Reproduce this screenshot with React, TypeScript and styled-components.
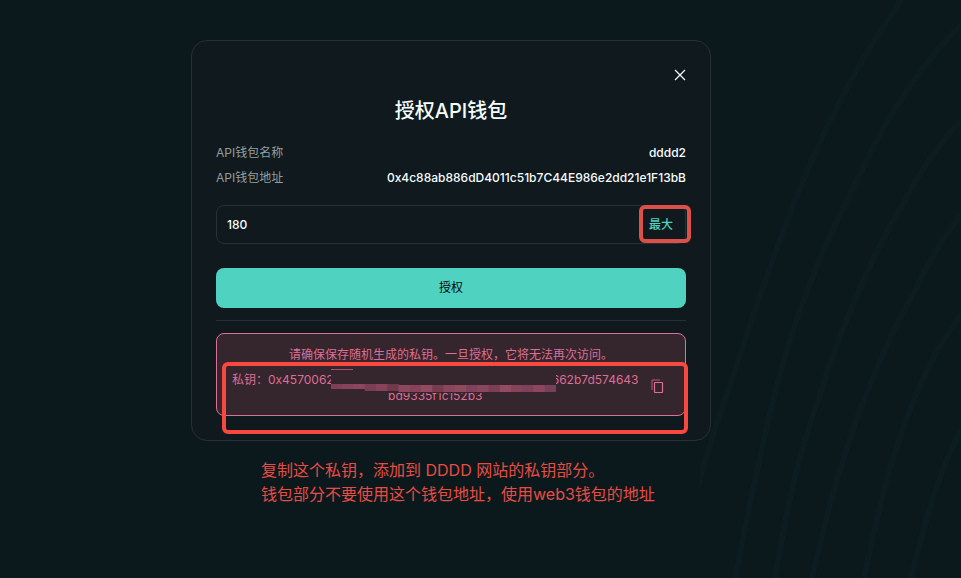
import React, { useState } from "react";
import styled, { createGlobalStyle } from "styled-components";

const GlobalStyle = createGlobalStyle`
  * { box-sizing: border-box; }
  body {
    margin: 0;
    background: #0b191d;
    color: #f6fefd;
    font-family: Inter, "Noto Sans CJK SC", sans-serif;
    font-size: 12px;
    line-height: 17px;
  }
  button, input { font: inherit; color: inherit; }
`;

const Page = styled.main`
  position: relative;
  display: flex;
  flex-direction: column;
  align-items: center;
  gap: 17px;
  min-height: 100vh;
  padding: 40px 59px 40px 0;
  overflow: hidden;
`;

const Waves = styled.svg`
  position: absolute;
  top: 0;
  right: 0;
  z-index: -1;
  fill: none;
  stroke: #0d1c20;
  stroke-width: 6;
`;

const Card = styled.section`
  display: flex;
  flex-direction: column;
  width: 100%;
  max-width: 520px;
  padding: 24px;
  border: 1px solid #273035;
  border-radius: 16px;
  background: #0f191e;
`;

const CloseButton = styled.button`
  display: flex;
  align-self: flex-end;
  padding: 4px 0;
  border: 0;
  background: none;
  cursor: pointer;
`;

const Title = styled.h1`
  margin: 12px 0 19px;
  font-size: 20px;
  font-weight: 500;
  line-height: 28px;
  text-align: center;
`;

const Details = styled.dl`
  display: flex;
  flex-direction: column;
  gap: 8px;
  margin: 0;
`;

const DetailRow = styled.div`
  display: flex;
  justify-content: space-between;
`;

const Term = styled.dt`
  color: #949e9c;
`;

const Value = styled.dd`
  margin: 0;
  font-weight: 500;
`;

const Field = styled.div`
  position: relative;
  display: flex;
  align-items: center;
  height: 39px;
  margin: 19px 0 24px;
  padding: 0 12px 0 10px;
  border: 1px solid #273035;
  border-radius: 8px;
`;

const DaysInput = styled.input`
  flex: 1;
  min-width: 0;
  padding: 0;
  border: 0;
  outline: 0;
  background: none;
  font-weight: 500;
`;

const MaxButton = styled.button`
  padding: 0;
  border: 0;
  background: none;
  color: #50d2c1;
  font-weight: 500;
  cursor: pointer;
`;

const Highlight = styled.span<{ $color: string; $inset: string }>`
  position: absolute;
  inset: ${(p) => p.$inset};
  border: 4px solid ${(p) => p.$color};
  border-radius: 6px;
  pointer-events: none;
`;

const SubmitButton = styled.button`
  height: 40px;
  padding: 0 0 2px;
  border: 0;
  border-radius: 8px;
  background: #50d2c1;
  color: #04060c;
  cursor: pointer;
`;

const Divider = styled.hr`
  width: 100%;
  height: 1px;
  margin: 12px 0;
  border: 0;
  background: #273035;
`;

const Warning = styled.div`
  position: relative;
  display: flex;
  flex-direction: column;
  gap: 9px;
  height: 83px;
  padding: 12px 15px;
  border: 1px solid #d9719a;
  border-radius: 8px;
  background: #35252d;
  color: #de6e94;
  text-align: center;
`;

const WarningText = styled.p`
  margin: 0;
`;

const KeyRow = styled.div`
  display: flex;
  align-items: center;
  gap: 12px;
`;

const KeyText = styled.p`
  margin: 0;
  line-height: 16px;
`;

const KeyLine = styled.span`
  display: flex;
  justify-content: center;
  white-space: nowrap;
`;

const Redaction = styled.span`
  position: relative;
  width: 218px;
`;

const Mosaic = styled.svg`
  position: absolute;
  top: -4px;
  left: -3px;
`;

const CopyButton = styled.button`
  display: flex;
  padding: 0 0 4px;
  border: 0;
  background: none;
  cursor: pointer;
`;

const Note = styled.p`
  width: 100%;
  max-width: 520px;
  margin: 0;
  padding-left: 70px;
  color: #e74c44;
  font-size: 16px;
  line-height: 24px;
`;

const tiles = [
  "#803f55", "#86435a", "#8b465d", "#7b3d52", "#884259", "#71394c", "#8d4860",
  "#874259", "#93495f", "#783c50", "#8b455c", "#8f4a62", "#82415a", "#8a465d",
  "#7d3e54", "#914b62", "#884359", "#80405a", "#8c475e", "#78405a",
];

export default function App() {
  const [days, setDays] = useState("180");
  return (
    <Page>
      <GlobalStyle />
      <Waves width="261" height="578" viewBox="700 0 261 578" aria-hidden="true">
        <path d="M901 0C865 52 846 88 832 117C808 165 790 213 780 240C760 295 748 330 735 370C718 420 705 455 690 520" />
        <path d="M961 25C925 60 903 96 888 120C872 147 860 174 850 195C826 240 813 275 800 310C782 360 768 412 735 578" />
        <path d="M961 120C938 145 919 173 905 200C885 233 868 268 855 300C841 333 829 363 820 395C800 450 790 490 775 578" />
        <path d="M961 215C943 237 930 259 918 285C898 320 883 352 870 385C851 430 833 485 812 578" />
        <path d="M961 315C946 335 934 354 925 375C901 425 884 480 864 578" />
        <path d="M961 430C943 464 925 518 911 578" />
      </Waves>
      <Card aria-labelledby="dialog-title">
        <CloseButton type="button" aria-label="关闭">
          <svg width="12" height="12" viewBox="0 0 12 12" fill="none" stroke="#f6fefd" strokeWidth="1.2">
            <path d="M1 1l10 10M11 1L1 11" />
          </svg>
        </CloseButton>
        <Title id="dialog-title">授权API钱包</Title>
        <Details>
          <DetailRow>
            <Term>API钱包名称</Term>
            <Value>dddd2</Value>
          </DetailRow>
          <DetailRow>
            <Term>API钱包地址</Term>
            <Value>0x4c88ab886dD4011c51b7C44E986e2dd21e1F13bB</Value>
          </DetailRow>
        </Details>
        <Field>
          <DaysInput aria-label="有效天数" value={days} onChange={(e) => setDays(e.target.value)} />
          <MaxButton type="button" onClick={() => setDays("180")}>最大</MaxButton>
          <Highlight $color="#dd4f49" $inset="-1px -6px 0 422px" />
        </Field>
        <SubmitButton type="button">授权</SubmitButton>
        <Divider />
        <Warning>
          <WarningText>请确保保存随机生成的私钥。一旦授权，它将无法再次访问。</WarningText>
          <KeyRow>
            <KeyText>
              <KeyLine>
                <span>私钥：0x4570062</span>
                <Redaction>
                  <Mosaic width="225" height="25" viewBox="0 0 225 25" aria-hidden="true">
                    <path d="M0 0H225V25H60L35 23H0Z" fill="#35252d" />
                    <path d="M0 1.5H22" stroke="#a8506e" />
                    {tiles.map((fill, i) => (
                      <rect key={i} x={i * 11.25} y={i < 6 ? 16 : 17} width="12" height={i < 3 ? 5 : 7} fill={fill} />
                    ))}
                  </Mosaic>
                </Redaction>
                <span>662b7d574643</span>
              </KeyLine>
              <KeyLine>bd9335f1c152b3</KeyLine>
            </KeyText>
            <CopyButton type="button" aria-label="复制私钥">
              <svg width="13" height="15" viewBox="0 0 13 15" fill="none" stroke="#de6e94">
                <path d="M1 11V1H9" opacity="0.75" />
                <rect x="3.5" y="3.5" width="8" height="10" rx="0.5" strokeWidth="1.2" />
              </svg>
            </CopyButton>
          </KeyRow>
          <Highlight $color="#f9483f" $inset="28px -3px -19px 5px" />
        </Warning>
      </Card>
      <Note>
        复制这个私钥，添加到 DDDD 网站的私钥部分。
        <br />
        钱包部分不要使用这个钱包地址，使用web3钱包的地址
      </Note>
    </Page>
  );
}
